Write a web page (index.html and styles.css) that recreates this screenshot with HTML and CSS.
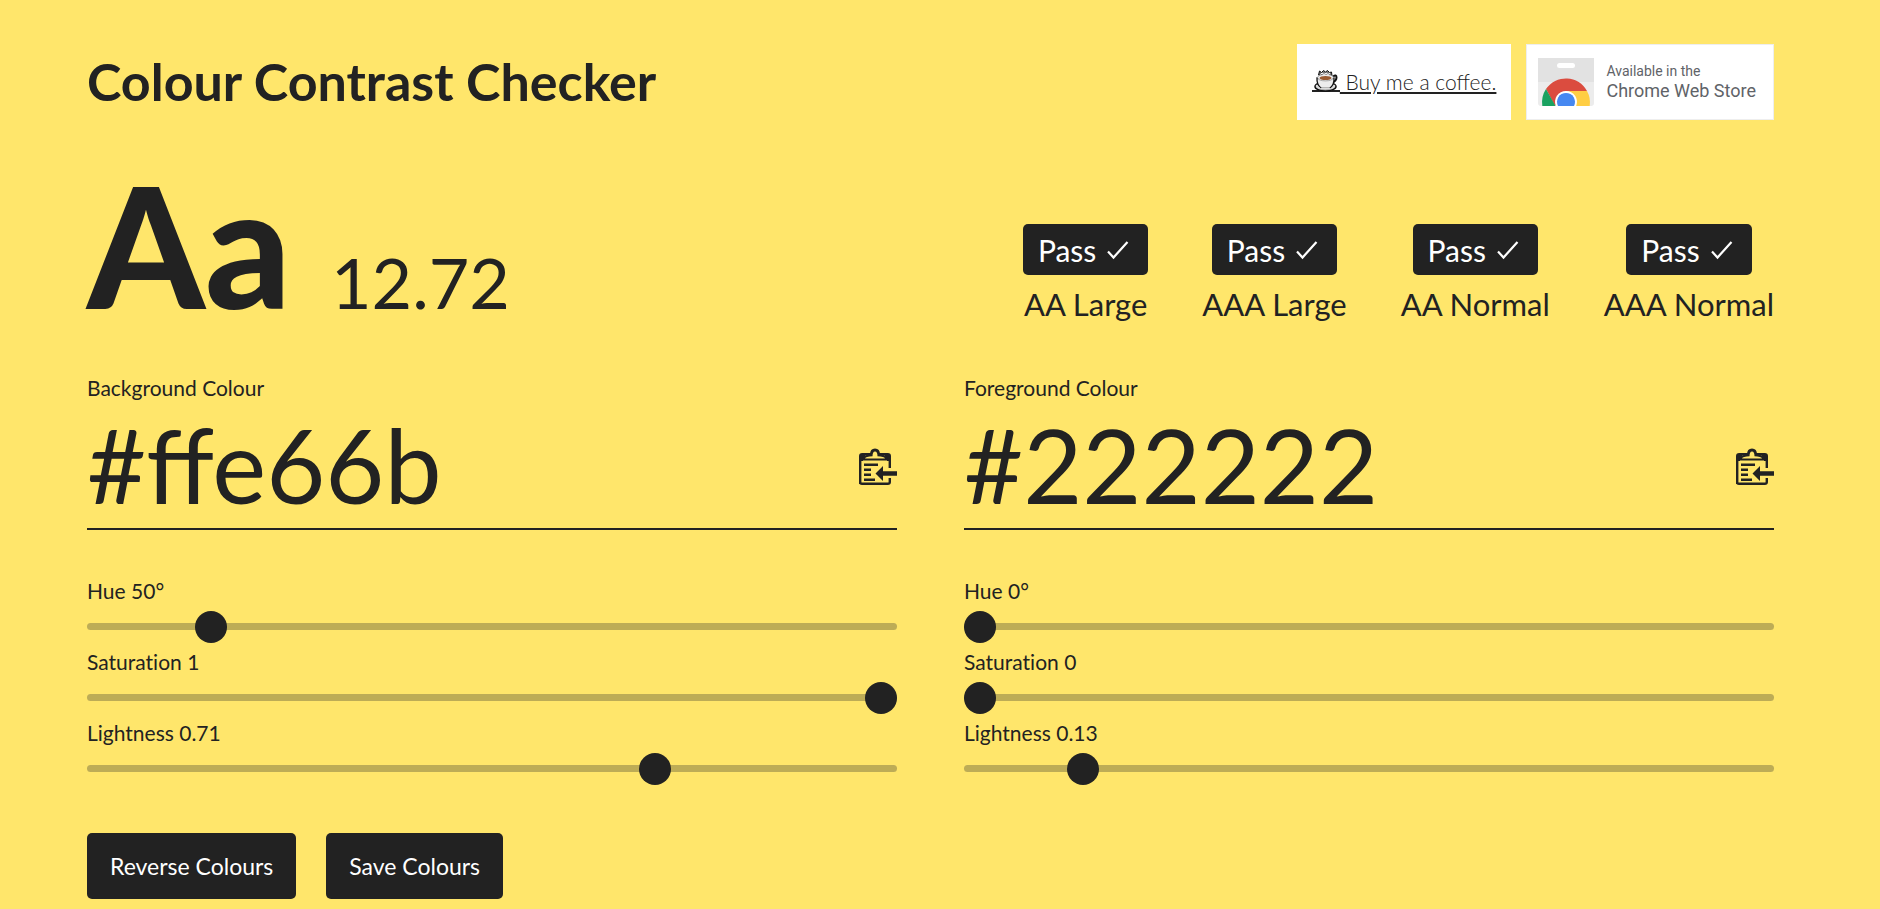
FILE: index.html
```html
<!DOCTYPE html>
<html lang="en">
<head>
<meta charset="utf-8">
<title>Colour Contrast Checker</title>
<link rel="stylesheet" href="styles.css">
</head>
<body>
<svg class="sprite" aria-hidden="true">
  <symbol id="check" viewBox="0 0 24 20"><path d="M2 11.500 7.500 17.500 21.500 2" fill="none" stroke="currentColor" stroke-width="2.200"/></symbol>
  <symbol id="paste" viewBox="0 0 38 38">
    <path d="M1.200 36V8q0-1.800 2-1.800h25.600q2 0 2 1.800v12M30.800 30v4q0 1.800-2 1.800H3q-1.800 0-1.800-1.800" fill="none" stroke="currentColor" stroke-width="2.400"/>
    <g fill="currentColor">
      <path d="M1 6.500h6L4 11v2H1zM31 6.500h-6l3 4.500v2h3z"/>
      <path d="M3 12.500Q3 7 11 6.500 11 .5 16 .5t5 6q8 .5 8 6z"/>
      <path d="M5 15.500h14V18H5zM5 20.500h7V23H5zM5 25.500h7V28H5zM5 30.500h11V33H5z"/>
      <path d="M16.500 25.500 24 18v5.200h14v4.600H24V33z"/>
    </g>
    <path class="knockout" d="M6 10.500q.8-2 7.500-2.200Q13.500 3.500 16 3.500t2.500 4.800q6.700.2 7.500 2.200z"/>
  </symbol>
</svg>
<main class="page">
  <header class="header">
    <h1 class="title">Colour Contrast Checker</h1>
    <nav class="promos">
      <a class="promo coffee" href="#">
        <svg class="cup" viewBox="0 0 28 24" aria-hidden="true">
          <path d="M0 22h28" stroke="#222" stroke-width="2"/>
          <path d="M6.500 6 7.500 2l2 1.500L11.500 1.500l2 1.500 2-1.500 2 2 2-.5.500 4z" fill="#777" stroke="#111"/>
          <path d="M21 7.500q3.500-2.500 3.500 1T19.500 14" fill="none" stroke="#111" stroke-width="2"/>
          <ellipse cx="13.500" cy="17.500" rx="10.500" ry="4.500" fill="#d8d8d8" stroke="#111" stroke-width="1.500"/>
          <path d="M5 9q-.5 7 4.500 10.500h8Q22.500 16 22 9z" fill="#ececec" stroke="#111" stroke-width="1.300"/>
          <path d="M4 15.500q-1 2 1 3 8 4 17 0 2-1 1-3L19 19H8.500z" fill="#dcdcdc"/>
          <ellipse cx="13.500" cy="8.600" rx="8" ry="3.300" fill="#eee" stroke="#777" stroke-width=".6"/>
          <ellipse cx="13.500" cy="9" rx="6" ry="2" fill="#9a5b32"/>
          <path d="M8.500 5.500 10 4l2 1.500L14 4l2 1.500L18 4" stroke="#fff" fill="none"/>
        </svg><span>&nbsp;Buy me a coffee.</span></a>
      <a class="promo store" href="#">
        <svg class="store-logo" viewBox="0 0 56 48" aria-hidden="true">
          <path d="M0 0h56v24H0z" fill="#e2e2e2"/>
          <path d="M0 24h56v21q0 3-3 3H3q-3 0-3-3z" fill="#ececec"/>
          <rect x="19" y="5" width="18" height="5" rx="2.500" fill="#fff"/>
          <path d="M8 31A24 24 0 0 1 49 33H28L17 48z" fill="#db4c3f"/>
          <path d="M4.300 48A24 24 0 0 1 8 31l9.500 17z" fill="#1aa260"/>
          <path d="M28 33h21a24 24 0 0 1 2.700 15H34z" fill="#ffce44"/>
          <path d="M17.800 48a11 11 0 1 1 20.400 0z" fill="#fff"/>
          <path d="M20 48a9 9 0 1 1 16 0z" fill="#4688f1"/>
        </svg>
        <span class="store-text"><span class="store-small">Available in the</span><span class="store-name">Chrome Web Store</span></span>
      </a>
    </nav>
  </header>

  <section class="summary">
    <div class="sample"><span class="letters">Aa</span><span class="ratio">12.72</span></div>
    <ul class="grades">
      <li class="grade"><span class="badge">Pass <svg class="check"><use href="#check"/></svg></span><span>AA Large</span></li>
      <li class="grade"><span class="badge">Pass <svg class="check"><use href="#check"/></svg></span><span>AAA Large</span></li>
      <li class="grade"><span class="badge">Pass <svg class="check"><use href="#check"/></svg></span><span>AA Normal</span></li>
      <li class="grade"><span class="badge">Pass <svg class="check"><use href="#check"/></svg></span><span>AAA Normal</span></li>
    </ul>
  </section>

  <form class="colours">
    <section class="colour">
      <label class="label" for="bg">Background Colour</label>
      <div class="field">
        <input class="hex" id="bg" type="text" value="#ffe66b">
        <button class="paste" type="button" aria-label="Paste background colour"><svg><use href="#paste"/></svg></button>
      </div>
      <div class="sliders">
        <label class="label" for="bg-h">Hue 50°</label>
        <input class="slider" id="bg-h" type="range" min="0" max="360" value="50">
        <label class="label" for="bg-s">Saturation 1</label>
        <input class="slider" id="bg-s" type="range" min="0" max="1" step="0.01" value="1">
        <label class="label" for="bg-l">Lightness 0.71</label>
        <input class="slider" id="bg-l" type="range" min="0" max="1" step="0.01" value="0.71">
      </div>
    </section>
    <section class="colour">
      <label class="label" for="fg">Foreground Colour</label>
      <div class="field">
        <input class="hex" id="fg" type="text" value="#222222">
        <button class="paste" type="button" aria-label="Paste foreground colour"><svg><use href="#paste"/></svg></button>
      </div>
      <div class="sliders">
        <label class="label" for="fg-h">Hue 0°</label>
        <input class="slider" id="fg-h" type="range" min="0" max="360" value="0">
        <label class="label" for="fg-s">Saturation 0</label>
        <input class="slider" id="fg-s" type="range" min="0" max="1" step="0.01" value="0">
        <label class="label" for="fg-l">Lightness 0.13</label>
        <input class="slider" id="fg-l" type="range" min="0" max="1" step="any" value="0.133">
      </div>
    </section>
  </form>

  <div class="actions">
    <button class="action" type="button">Reverse Colours</button>
    <button class="action" type="button">Save Colours</button>
  </div>
</main>
</body>
</html>
```
FILE: styles.css
```css
:root {
  --bg: #ffe66b;
  --fg: #222;
}

* { box-sizing: border-box; }

body {
  margin: 0;
  background: var(--bg);
  color: var(--fg);
  font-family: Lato, "Open Sans", sans-serif;
  font-size: 21px;
  line-height: 27px;
}

.sprite { display: none; }

.page { padding: 44px 106px 8px 87px; }

.header {
  display: flex;
  justify-content: space-between;
  align-items: center;
}

.title {
  margin: 0;
  padding-bottom: 2px;
  font-size: 52px;
  line-height: 72px;
  font-weight: 700;
}

.promos { display: flex; gap: 15px; }

.promo {
  display: flex;
  align-items: center;
  height: 76px;
  background: #fff;
}

.coffee {
  padding: 0 15px 2px;
  color: #222;
  font-weight: 300;
  font-size: 21px;
  text-decoration: underline 2px;
  text-underline-offset: 2px;
}

.cup { width: 28px; height: 24px; }

.store {
  gap: 12px;
  padding: 0 17px 0 11px;
  border: 1px solid #eee;
  color: #5f6368;
  text-decoration: none;
  font-family: Roboto, sans-serif;
}

.store-logo { width: 56px; height: 48px; }

.store-text { display: flex; flex-direction: column; }

.store-small { font-size: 14px; line-height: 18px; }

.store-name { font-size: 18px; line-height: 22px; }

.summary {
  display: flex;
  justify-content: space-between;
  align-items: flex-end;
  padding-top: 44px;
}

.sample {
  display: flex;
  align-items: baseline;
  gap: 40px;
  padding-bottom: 34px;
}

.letters { font-size: 168px; line-height: 160px; font-weight: 900; }

.ratio { font-size: 70px; line-height: 80px; }

.grades {
  display: flex;
  gap: 54px;
  margin: 0;
  padding: 0 0 34px;
  list-style: none;
  font-size: 31px;
  line-height: 40px;
}

.grade {
  display: flex;
  flex-direction: column;
  align-items: center;
  gap: 9px;
}

.badge {
  display: flex;
  align-items: center;
  gap: 10px;
  height: 51px;
  padding: 0 18px 0 15px;
  border-radius: 5px;
  background: var(--fg);
  color: #fff;
  font-size: 30px;
}

.check { width: 24px; height: 20px; }

.colours {
  display: grid;
  grid-template-columns: repeat(2, minmax(0, 1fr));
  gap: 67px;
  padding-top: 16px;
}

.colour, .sliders { display: flex; flex-direction: column; }

.label { font-variant-ligatures: none; }

.field {
  display: flex;
  align-items: center;
  height: 129px;
  border-bottom: 2px solid var(--fg);
}

.hex {
  flex: 1;
  min-width: 0;
  height: 124px;
  padding: 0;
  border: 0;
  outline: 0;
  background: transparent;
  color: inherit;
  font: 400 102px/124px Lato, sans-serif;
}

.paste {
  display: flex;
  padding: 4px 0 0;
  border: 0;
  background: none;
  color: inherit;
}

.paste svg { width: 38px; height: 38px; }

.knockout { fill: var(--bg); }

.sliders { padding-top: 47px; }

.slider {
  appearance: none;
  width: 100%;
  height: 32px;
  margin: 6px 0;
  background: transparent;
}

.slider::-webkit-slider-runnable-track {
  height: 7px;
  border-radius: 4px;
  background: #bdac56;
}

.slider::-webkit-slider-thumb {
  appearance: none;
  width: 32px;
  height: 32px;
  margin-top: -12px;
  border-radius: 50%;
  background: var(--fg);
}

.actions { display: flex; gap: 30px; padding-top: 43px; }

.action {
  height: 66px;
  padding: 0 23px;
  border: 0;
  border-radius: 5px;
  background: var(--fg);
  color: #fff;
  font: 400 23px/28px Lato, sans-serif;
}
```
